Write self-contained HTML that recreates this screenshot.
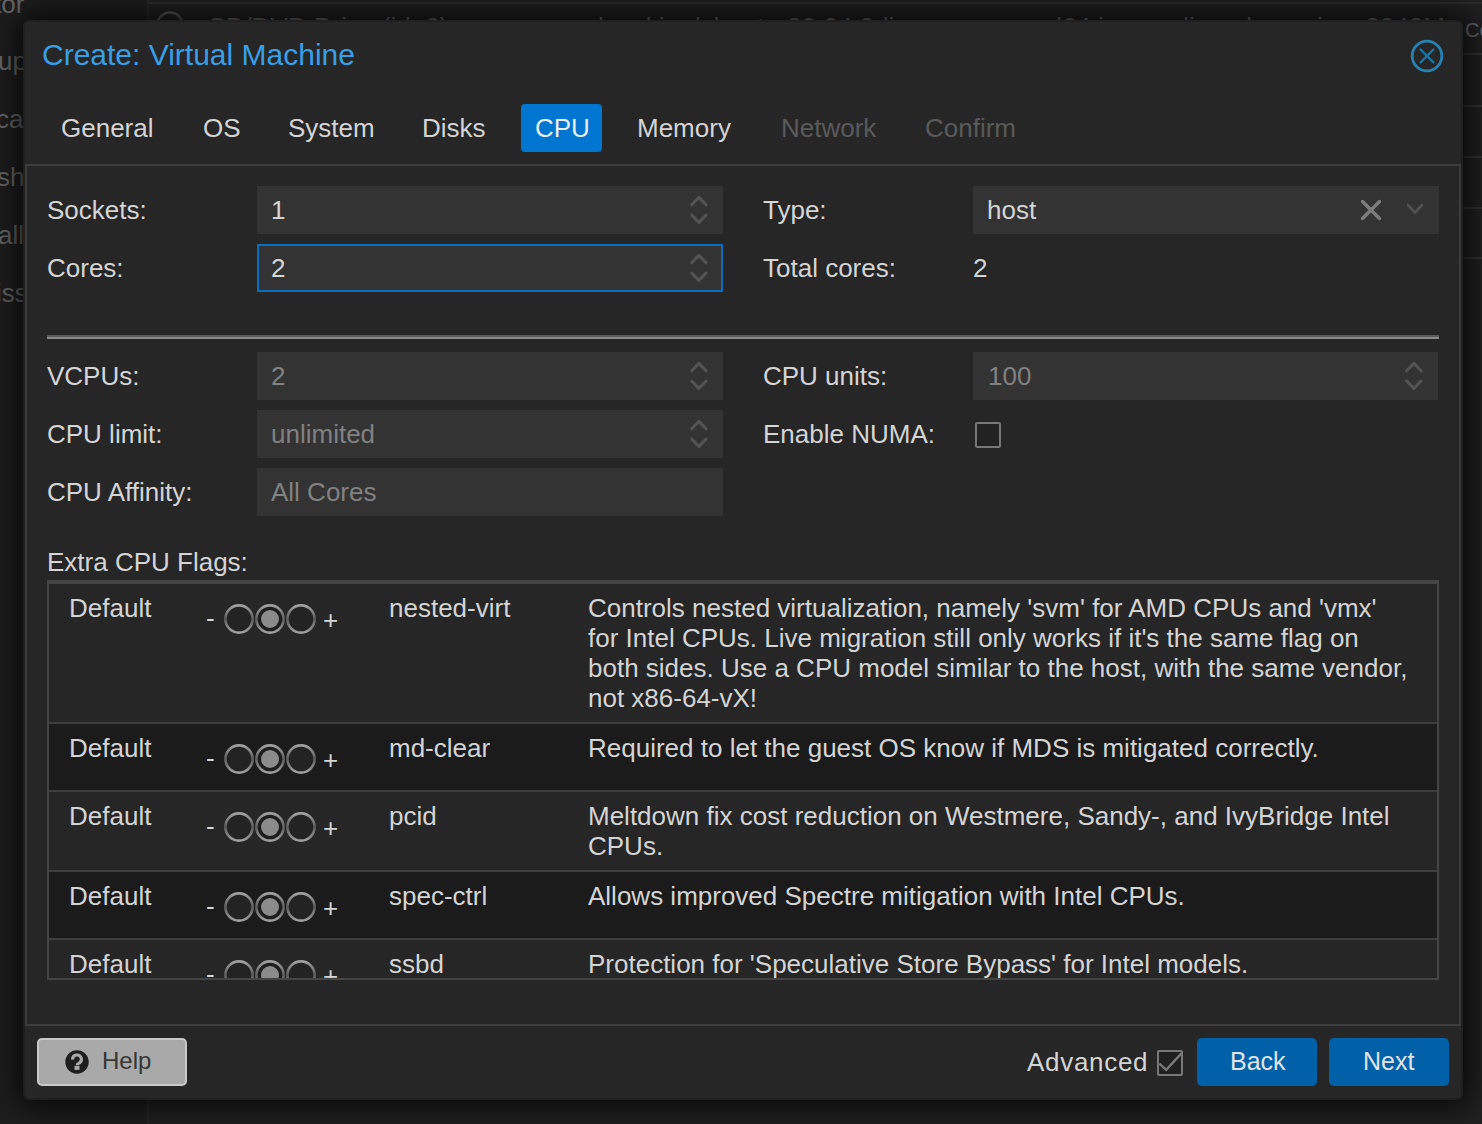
<!DOCTYPE html>
<html><head><meta charset="utf-8">
<style>
*{box-sizing:border-box;margin:0;padding:0}
html,body{width:1482px;height:1124px;overflow:hidden;background:#202020;font-family:"Liberation Sans",sans-serif;}
.a{position:absolute}
.t{position:absolute;white-space:pre;font-size:26px;line-height:30px;color:#d4d4d4}
.bgl{color:#686868}
#dlg{position:absolute;left:23px;top:20px;width:1440px;height:1080px;background:#262626;border:2px solid #1f1f1f;border-radius:6px;box-shadow:0 0 30px 6px rgba(0,0,0,.8)}
.fld{position:absolute;background:#333333;height:48px}
.spin{position:absolute;width:20px;height:32px}
.gray{color:#818181}
.dis{color:#5a5a5a}
.radio{position:absolute;width:30px;height:30px;border-radius:50%;border:3px solid;border-color:#8a8a8a #666 #8a8a8a #666;background:#232323;box-shadow:0 0 1px rgba(120,120,120,.6)}
.radio.on{background:#1a1a1a}
.radio.on::after{content:"";position:absolute;left:3px;top:3px;width:18px;height:18px;border-radius:50%;background:#8c8c8c;box-shadow:0 0 1px #8c8c8c}
</style></head><body>
<div class="a" style="left:0px;top:0px;width:147px;height:1124px;background:#1e1e1e;"></div>
<div class="a" style="left:147px;top:0px;width:2px;height:1124px;background:#262626;"></div>
<div class="a" style="left:149px;top:2px;width:1333px;height:2px;background:#2c2c2c;"></div>
<div class="a" style="left:1463px;top:53px;width:19px;height:2px;background:#333;"></div>
<div class="a" style="left:1463px;top:105px;width:19px;height:2px;background:#333;"></div>
<div class="a" style="left:1463px;top:156px;width:19px;height:2px;background:#333;"></div>
<div class="a" style="left:1463px;top:207px;width:19px;height:2px;background:#333;"></div>
<div class="a" style="left:1463px;top:257px;width:19px;height:2px;background:#333;"></div>
<div class="t bgl" style="left:-6px;top:-11px;">tor</div>
<div class="t bgl" style="left:-2px;top:46px;">up</div>
<div class="t bgl" style="left:-4px;top:104px;">ca</div>
<div class="t bgl" style="left:-3px;top:162px;">sh</div>
<div class="t bgl" style="left:-2px;top:220px;">all</div>
<div class="t bgl" style="left:-4px;top:278px;">iss</div>
<div class="t bgl" style="left:1465px;top:15px;font-size:20px">Co</div>
<svg class="a" style="left:155px;top:10px" width="30" height="30" viewBox="0 0 30 30"><circle cx="15" cy="15" r="12.5" fill="none" stroke="#555" stroke-width="2.5"/></svg>
<div class="t bgl" style="left:207px;top:12px;">CD/DVD Drive (ide2)</div>
<div class="t bgl" style="left:598px;top:12px;">local:iso/ubuntu-22.04.3-live-server-amd64.iso,media=cdrom,size=2048M</div>
<svg width="0" height="0" style="position:absolute"><defs><linearGradient id="rg" x1="0" y1="0" x2="0" y2="1"><stop offset="0" stop-color="#a0a0a0"/><stop offset="0.5" stop-color="#5c5c5c"/><stop offset="1" stop-color="#a0a0a0"/></linearGradient></defs></svg>
<div id="dlg"></div>
<div class="t " style="left:42px;top:41px;font-size:30px;line-height:34px;top:38px;color:#389ee6">Create: Virtual Machine</div>
<svg class="a" style="left:1409px;top:38px" width="36" height="36" viewBox="0 0 36 36">
<circle cx="18" cy="18" r="14.8" fill="none" stroke="#2782b2" stroke-width="2.8"/>
<path d="M11.6 11.6L24.4 24.4M24.4 11.6L11.6 24.4" stroke="#18739f" stroke-width="2.4" stroke-linecap="round"/></svg>
<div class="a" style="left:521px;top:104px;width:81px;height:48px;background:#0076d0;border-radius:4px"></div>
<div class="t " style="left:61px;top:113px;">General</div>
<div class="t " style="left:203px;top:113px;">OS</div>
<div class="t " style="left:288px;top:113px;">System</div>
<div class="t " style="left:422px;top:113px;">Disks</div>
<div class="t " style="left:535px;top:113px;color:#ececec">CPU</div>
<div class="t " style="left:637px;top:113px;">Memory</div>
<div class="t dis" style="left:781px;top:113px;">Network</div>
<div class="t dis" style="left:925px;top:113px;">Confirm</div>
<div class="a" style="left:25px;top:164px;width:1436px;height:2px;background:#3d3d3d;"></div>
<div class="a" style="left:25px;top:164px;width:2px;height:862px;background:#3b3b3b;"></div>
<div class="a" style="left:1459px;top:164px;width:2px;height:862px;background:#3b3b3b;"></div>
<div class="a" style="left:25px;top:1024px;width:1436px;height:2px;background:#3d3d3d;"></div>
<div class="t " style="left:47px;top:195px;">Sockets:</div>
<div class="fld" style="left:257px;top:186px;width:466px;height:48px;"></div>
<div class="t " style="left:271px;top:195px;">1</div>
<svg class="spin" style="left:689px;top:194px" width="20" height="32" viewBox="0 0 20 32"><path d="M2.7 10.8L9.9 3.4L17.1 10.8M2.7 21L9.9 28.4L17.1 21" fill="none" stroke="#545454" stroke-width="3" stroke-linecap="round" stroke-linejoin="round"/></svg>
<div class="t " style="left:47px;top:253px;">Cores:</div>
<div class="fld" style="left:257px;top:244px;width:466px;height:48px;border:2px solid #0a6cbd"></div>
<div class="t " style="left:271px;top:253px;">2</div>
<svg class="spin" style="left:689px;top:252px" width="20" height="32" viewBox="0 0 20 32"><path d="M2.7 10.8L9.9 3.4L17.1 10.8M2.7 21L9.9 28.4L17.1 21" fill="none" stroke="#545454" stroke-width="3" stroke-linecap="round" stroke-linejoin="round"/></svg>
<div class="t " style="left:763px;top:195px;">Type:</div>
<div class="fld" style="left:973px;top:186px;width:466px;height:48px;"></div>
<div class="t " style="left:987px;top:195px;">host</div>
<svg class="a" style="left:1358px;top:197px" width="26" height="26" viewBox="0 0 26 26"><path d="M4.5 4.5L21.5 21.5M21.5 4.5L4.5 21.5" stroke="#7c7c7c" stroke-width="3.4" stroke-linecap="round"/></svg>
<svg class="a" style="left:1405px;top:201px" width="20" height="16" viewBox="0 0 20 16"><path d="M3 4L10 11.5L17 4" fill="none" stroke="#525252" stroke-width="2.6" stroke-linecap="round"/></svg>
<div class="t " style="left:763px;top:253px;">Total cores:</div>
<div class="t " style="left:973px;top:253px;">2</div>
<div class="a" style="left:47px;top:335px;width:1392px;height:2px;background:#5a5a5a;"></div>
<div class="a" style="left:47px;top:337px;width:1392px;height:2px;background:#8a8a8a;"></div>
<div class="t " style="left:47px;top:361px;">VCPUs:</div>
<div class="fld" style="left:257px;top:352px;width:466px;height:48px;"></div>
<div class="t gray" style="left:271px;top:361px;">2</div>
<svg class="spin" style="left:689px;top:360px" width="20" height="32" viewBox="0 0 20 32"><path d="M2.7 10.8L9.9 3.4L17.1 10.8M2.7 21L9.9 28.4L17.1 21" fill="none" stroke="#545454" stroke-width="3" stroke-linecap="round" stroke-linejoin="round"/></svg>
<div class="t " style="left:47px;top:419px;">CPU limit:</div>
<div class="fld" style="left:257px;top:410px;width:466px;height:48px;"></div>
<div class="t gray" style="left:271px;top:419px;">unlimited</div>
<svg class="spin" style="left:689px;top:418px" width="20" height="32" viewBox="0 0 20 32"><path d="M2.7 10.8L9.9 3.4L17.1 10.8M2.7 21L9.9 28.4L17.1 21" fill="none" stroke="#545454" stroke-width="3" stroke-linecap="round" stroke-linejoin="round"/></svg>
<div class="t " style="left:47px;top:477px;">CPU Affinity:</div>
<div class="fld" style="left:257px;top:468px;width:466px;height:48px;"></div>
<div class="t gray" style="left:271px;top:477px;">All Cores</div>
<div class="t " style="left:763px;top:361px;">CPU units:</div>
<div class="fld" style="left:973px;top:352px;width:465px;height:48px;"></div>
<div class="t gray" style="left:988px;top:361px;">100</div>
<svg class="spin" style="left:1404px;top:360px" width="20" height="32" viewBox="0 0 20 32"><path d="M2.7 10.8L9.9 3.4L17.1 10.8M2.7 21L9.9 28.4L17.1 21" fill="none" stroke="#545454" stroke-width="3" stroke-linecap="round" stroke-linejoin="round"/></svg>
<div class="t " style="left:763px;top:419px;">Enable NUMA:</div>
<div class="a" style="left:975px;top:422px;width:26px;height:26px;background:#222;border:2px solid #777;border-radius:2px"></div>
<div class="t " style="left:47px;top:547px;">Extra CPU Flags:</div>
<div class="a" style="left:47px;top:580px;width:1392px;height:400px;border:2px solid #444;border-top-width:4px;overflow:hidden">
<div class="a" style="left:0;top:0px;width:1388px;height:138px;background:#262626"></div>
<div class="a" style="left:0;top:138px;width:1388px;height:2px;background:#3e3e3e"></div>
<div class="t" style="left:20px;top:9px">Default</div>
<div class="t" style="left:157px;top:19px">-</div>
<svg class="a" style="left:174px;top:19px" width="96" height="32" viewBox="0 0 96 32"><circle cx="16" cy="16" r="13.6" fill="#232323" stroke="url(#rg)" stroke-width="2.6"/><circle cx="47" cy="16" r="13.6" fill="#1d1d1d" stroke="url(#rg)" stroke-width="2.6"/><circle cx="47" cy="16" r="9" fill="#8b8b8b"/><circle cx="78" cy="16" r="13.6" fill="#232323" stroke="url(#rg)" stroke-width="2.6"/></svg>
<div class="t" style="left:274px;top:21px">+</div>
<div class="t" style="left:340px;top:9px">nested-virt</div>
<div class="t" style="left:539px;top:9px">Controls nested virtualization, namely 'svm' for AMD CPUs and 'vmx'
for Intel CPUs. Live migration still only works if it's the same flag on
both sides. Use a CPU model similar to the host, with the same vendor,
not x86-64-vX!</div>
<div class="a" style="left:0;top:140px;width:1388px;height:66px;background:#1b1b1b"></div>
<div class="a" style="left:0;top:206px;width:1388px;height:2px;background:#3e3e3e"></div>
<div class="t" style="left:20px;top:149px">Default</div>
<div class="t" style="left:157px;top:159px">-</div>
<svg class="a" style="left:174px;top:159px" width="96" height="32" viewBox="0 0 96 32"><circle cx="16" cy="16" r="13.6" fill="#232323" stroke="url(#rg)" stroke-width="2.6"/><circle cx="47" cy="16" r="13.6" fill="#1d1d1d" stroke="url(#rg)" stroke-width="2.6"/><circle cx="47" cy="16" r="9" fill="#8b8b8b"/><circle cx="78" cy="16" r="13.6" fill="#232323" stroke="url(#rg)" stroke-width="2.6"/></svg>
<div class="t" style="left:274px;top:161px">+</div>
<div class="t" style="left:340px;top:149px">md-clear</div>
<div class="t" style="left:539px;top:149px">Required to let the guest OS know if MDS is mitigated correctly.</div>
<div class="a" style="left:0;top:208px;width:1388px;height:78px;background:#262626"></div>
<div class="a" style="left:0;top:286px;width:1388px;height:2px;background:#3e3e3e"></div>
<div class="t" style="left:20px;top:217px">Default</div>
<div class="t" style="left:157px;top:227px">-</div>
<svg class="a" style="left:174px;top:227px" width="96" height="32" viewBox="0 0 96 32"><circle cx="16" cy="16" r="13.6" fill="#232323" stroke="url(#rg)" stroke-width="2.6"/><circle cx="47" cy="16" r="13.6" fill="#1d1d1d" stroke="url(#rg)" stroke-width="2.6"/><circle cx="47" cy="16" r="9" fill="#8b8b8b"/><circle cx="78" cy="16" r="13.6" fill="#232323" stroke="url(#rg)" stroke-width="2.6"/></svg>
<div class="t" style="left:274px;top:229px">+</div>
<div class="t" style="left:340px;top:217px">pcid</div>
<div class="t" style="left:539px;top:217px">Meltdown fix cost reduction on Westmere, Sandy-, and IvyBridge Intel
CPUs.</div>
<div class="a" style="left:0;top:288px;width:1388px;height:66px;background:#1b1b1b"></div>
<div class="a" style="left:0;top:354px;width:1388px;height:2px;background:#3e3e3e"></div>
<div class="t" style="left:20px;top:297px">Default</div>
<div class="t" style="left:157px;top:307px">-</div>
<svg class="a" style="left:174px;top:307px" width="96" height="32" viewBox="0 0 96 32"><circle cx="16" cy="16" r="13.6" fill="#232323" stroke="url(#rg)" stroke-width="2.6"/><circle cx="47" cy="16" r="13.6" fill="#1d1d1d" stroke="url(#rg)" stroke-width="2.6"/><circle cx="47" cy="16" r="9" fill="#8b8b8b"/><circle cx="78" cy="16" r="13.6" fill="#232323" stroke="url(#rg)" stroke-width="2.6"/></svg>
<div class="t" style="left:274px;top:309px">+</div>
<div class="t" style="left:340px;top:297px">spec-ctrl</div>
<div class="t" style="left:539px;top:297px">Allows improved Spectre mitigation with Intel CPUs.</div>
<div class="a" style="left:0;top:356px;width:1388px;height:66px;background:#262626"></div>
<div class="t" style="left:20px;top:365px">Default</div>
<div class="t" style="left:157px;top:375px">-</div>
<svg class="a" style="left:174px;top:375px" width="96" height="32" viewBox="0 0 96 32"><circle cx="16" cy="16" r="13.6" fill="#232323" stroke="url(#rg)" stroke-width="2.6"/><circle cx="47" cy="16" r="13.6" fill="#1d1d1d" stroke="url(#rg)" stroke-width="2.6"/><circle cx="47" cy="16" r="9" fill="#8b8b8b"/><circle cx="78" cy="16" r="13.6" fill="#232323" stroke="url(#rg)" stroke-width="2.6"/></svg>
<div class="t" style="left:274px;top:377px">+</div>
<div class="t" style="left:340px;top:365px">ssbd</div>
<div class="t" style="left:539px;top:365px">Protection for 'Speculative Store Bypass' for Intel models.</div>
</div>
<div class="a" style="left:37px;top:1038px;width:150px;height:48px;background:#a9a9a9;border:2px solid #c9c9c9;border-radius:5px"></div>
<svg class="a" style="left:65px;top:1050px" width="24" height="24" viewBox="0 0 24 24"><circle cx="12" cy="12" r="11.7" fill="#1e1e1e"/><path d="M7.6 9.6A4.4 4.4 0 1 1 14.2 13.2Q12.1 14.1 12.1 15.3" fill="none" stroke="#a9a9a9" stroke-width="3.1"/><rect x="9.5" y="15.9" width="5" height="4" fill="#a9a9a9"/></svg>
<div class="t " style="left:102px;top:1045px;color:#363636;font-size:24px;top:1046px">Help</div>
<div class="t " style="left:1027px;top:1047px;letter-spacing:0.7px">Advanced</div>
<svg class="a" style="left:1156px;top:1049px" width="28" height="28" viewBox="0 0 28 28"><rect x="2" y="2" width="24" height="24" rx="1" fill="#202020" stroke="#787878" stroke-width="2"/><path d="M3.4 14.6L10.2 20.8L25.4 4.4" fill="none" stroke="#787878" stroke-width="2.4"/></svg>
<div class="a" style="left:1197px;top:1038px;width:120px;height:48px;background:#0061a8;border-radius:5px"></div>
<div class="a" style="left:1329px;top:1038px;width:120px;height:48px;background:#0061a8;border-radius:5px"></div>
<div class="t " style="left:1230px;top:1045px;color:#e2e2e2;font-size:25px;top:1046px">Back</div>
<div class="t " style="left:1363px;top:1045px;color:#e2e2e2;font-size:25px;top:1046px">Next</div>
</body></html>
